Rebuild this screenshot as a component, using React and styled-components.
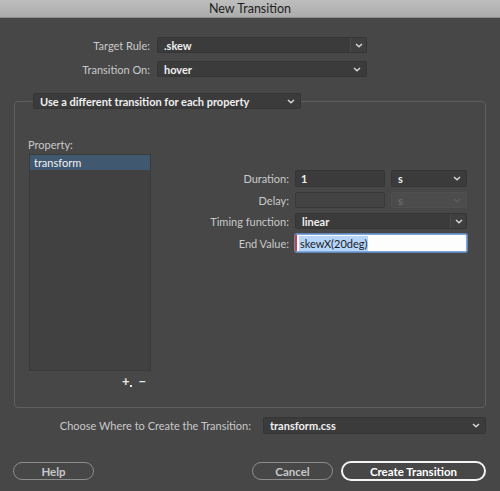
import React from 'react'
import styled, { createGlobalStyle, css } from 'styled-components'

const Global = createGlobalStyle`
  html, body { margin: 0; padding: 0; background: #474747; }
  * { box-sizing: border-box; }
`

const Window = styled.div`
  width: 500px;
  height: 491px;
  background: #474747;
  font-family: Lato, "Open Sans", sans-serif;
  font-size: 11px;
  color: #c9c9c9;
  display: flex;
  flex-direction: column;
  overflow: hidden;
`

const TitleBar = styled.div`
  height: 18px;
  flex: none;
  background: linear-gradient(#bebebe, #acacac);
  border-bottom: 1px solid #8c8c8c;
  color: #1e1e1e;
  font-size: 12.5px;
  display: flex;
  align-items: center;
  justify-content: center;
`

const Body = styled.div`
  padding: 19px 14px 0 14px;
  display: flex;
  flex-direction: column;
`

const TopForm = styled.div`
  display: grid;
  grid-template-columns: 136px 210px;
  column-gap: 7px;
  row-gap: 8px;
  align-items: center;
`

const Label = styled.label`
  text-align: right;
  white-space: nowrap;
  color: #c9c9c9;
`

const fieldBase = css`
  height: ${(p) => p.h || 16}px;
  border-radius: 2px;
  display: flex;
  align-items: center;
  font-weight: 700;
  color: #efefef;
  white-space: nowrap;
`

const Select = styled.div`
  ${fieldBase};
  background: ${(p) => (p.disabled ? '#4c4c4c' : '#3b3b3b')};
  border: 1px solid ${(p) => (p.disabled ? '#4f4f4f' : '#353535')};
  color: ${(p) => (p.disabled ? '#6a6a6a' : '#efefef')};
  width: ${(p) => p.w}px;
  padding-left: 6px;
`

const SelectText = styled.span`
  flex: 1;
`

const Arrow = styled.span`
  width: ${(p) => (p.split ? 16 : 18)}px;
  height: 100%;
  display: flex;
  align-items: center;
  justify-content: center;
  border-left: ${(p) => (p.split ? '1px solid #4a4a4a' : 'none')};
  background: ${(p) => (p.split ? '#3f3f3f' : 'transparent')};
`

const Chevron = ({ dim }) => (
  <svg width="8" height="5" viewBox="0 0 8 5">
    <path d="M1 1 L4 3.8 L7 1" fill="none" stroke={dim ? '#5e5e5e' : '#d6d6d6'} strokeWidth="1.5" />
  </svg>
)

const Dropdown = ({ value, w, h, split, disabled }) => (
  <Select w={w} h={h} disabled={disabled}>
    <SelectText>{value}</SelectText>
    <Arrow split={split}>
      <Chevron dim={disabled} />
    </Arrow>
  </Select>
)

const Group = styled.fieldset`
  margin: 16px 0 0 0;
  padding: 29px 14px 20px 14px;
  border: 1px solid #5f5f5f;
  border-radius: 4px;
  min-width: 0;
  width: 472px;
  height: 315px;
`

const Legend = styled.legend`
  padding: 0;
  margin-left: 4px;
`

const GroupInner = styled.div`
  display: flex;
  align-items: flex-start;
`

const PropertyCol = styled.div`
  width: 122px;
  display: flex;
  flex-direction: column;
`

const PropLabel = styled.div`
  line-height: 14px;
  margin-left: -1px;
  margin-bottom: 2px;
`

const List = styled.div`
  height: 217px;
  background: #414141;
  border: 1px solid #3a3a3a;
`

const ListItem = styled.div`
  height: 15px;
  padding-left: 4px;
  display: flex;
  align-items: center;
  color: #f2f2f2;
  background: ${(p) => (p.selected ? '#405870' : 'transparent')};
`

const ListButtons = styled.div`
  display: flex;
  justify-content: flex-end;
  gap: 9px;
  padding: 4px 5px 0 0;
  color: #e8e8e8;
  font-weight: 700;
  font-size: 13px;
  line-height: 12px;
`

const AddButton = styled.span`
  position: relative;
  &::after {
    content: '';
    position: absolute;
    right: -3px;
    bottom: 0;
    width: 2px;
    height: 2px;
    background: #e8e8e8;
  }
`

const PropForm = styled.div`
  flex: 1;
  display: grid;
  grid-template-columns: 1fr 90px 76px;
  column-gap: 6px;
  row-gap: 5px;
  align-items: center;
  padding: 32px 4px 0 0;
`

const TextInput = styled.div`
  ${fieldBase};
  background: ${(p) => (p.disabled ? '#434343' : '#3b3b3b')};
  border: 1px solid ${(p) => (p.disabled ? '#3a3a3a' : '#353535')};
  padding-left: 5px;
`

const FocusInput = styled.div`
  ${fieldBase};
  grid-column: span 2;
  background: #fdfdfd;
  border: 1px solid #7fa6d8;
  border-left: 2px solid #c2454d;
  box-shadow: 0 0 0 1px #5f85b9;
  padding-left: 2px;
  font-weight: 400;
  color: #1c1c1c;
`

const Highlight = styled.span`
  background: #b5d5fb;
  padding: 1px 1px;
`

const Span2 = styled.div`
  grid-column: span 2;
  display: flex;
`

const WhereRow = styled.div`
  display: flex;
  align-items: center;
  justify-content: flex-end;
  gap: 12px;
  margin: 9px 0 0 0;
`

const Buttons = styled.div`
  display: flex;
  align-items: center;
  margin: 27px 0 0 -1px;
`

const Button = styled.button`
  height: 18px;
  width: ${(p) => p.w}px;
  border-radius: 9px;
  background: transparent;
  font-family: inherit;
  font-size: 11.5px;
  font-weight: 700;
  padding: 0;
  margin-left: ${(p) => p.ml || 0}px;
  color: ${(p) => (p.primary ? '#ffffff' : '#c8c8c8')};
  border: ${(p) => (p.primary ? '2px solid #f4f4f4' : '1.5px solid #8d8d8d')};
  ${(p) => p.primary && 'height: 20px; border-radius: 10px;'}
`

export default function App() {
  return (
    <Window>
      <Global />
      <TitleBar>New Transition</TitleBar>
      <Body>
        <TopForm>
          <Label>Target Rule:</Label>
          <Dropdown value=".skew" w={210} split />
          <Label>Transition On:</Label>
          <Dropdown value="hover" w={210} />
        </TopForm>

        <Group>
          <Legend>
            <Dropdown value="Use a different transition for each property" w={268} />
          </Legend>
          <GroupInner>
            <PropertyCol>
              <PropLabel>Property:</PropLabel>
              <List>
                <ListItem selected>transform</ListItem>
              </List>
              <ListButtons>
                <AddButton>+</AddButton>
                <span>−</span>
              </ListButtons>
            </PropertyCol>
            <PropForm>
              <Label>Duration:</Label>
              <TextInput h={17}>1</TextInput>
              <Dropdown value="s" w={76} h={17} />
              <Label>Delay:</Label>
              <TextInput disabled />
              <Dropdown value="s" w={76} disabled />
              <Label>Timing function:</Label>
              <Span2>
                <Dropdown value="linear" w={172} split />
              </Span2>
              <Label>End Value:</Label>
              <FocusInput h={18}>
                <Highlight>skewX(20deg)</Highlight>
              </FocusInput>
            </PropForm>
          </GroupInner>
        </Group>

        <WhereRow>
          <Label>Choose Where to Create the Transition:</Label>
          <Dropdown value="transform.css" w={223} h={17} />
        </WhereRow>

        <Buttons>
          <Button w={81}>Help</Button>
          <Button w={81} ml={158}>Cancel</Button>
          <Button w={145} ml={8} primary>Create Transition</Button>
        </Buttons>
      </Body>
    </Window>
  )
}
